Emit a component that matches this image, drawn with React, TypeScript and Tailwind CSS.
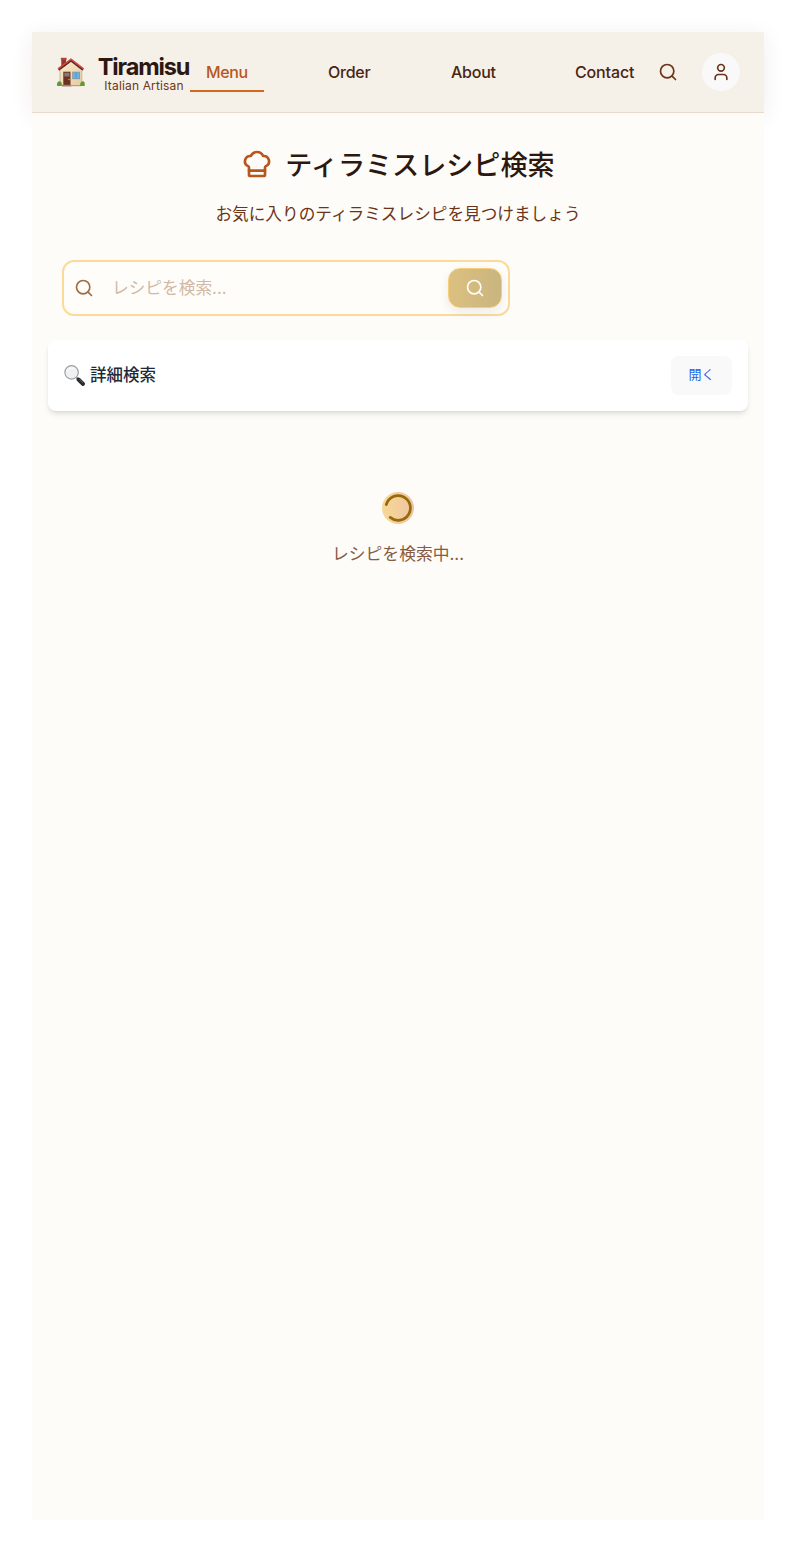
import React from "react";
import { ChefHat, Search, User } from "lucide-react";

function House() {
  return (
    <svg viewBox="0 0 32 32" className="h-8 w-8 shrink-0" aria-label="Home">
      <defs>
        <linearGradient id="wall" x1="0" x2="1" y1="0" y2="1">
          <stop offset="0" stopColor="#faebcd" />
          <stop offset="1" stopColor="#e4cba2" />
        </linearGradient>
      </defs>
      <path d="M6.300 2.500h4.800v8H6.300z" fill="#94372d" />
      <path d="M5.800 1.800h5.800v2H5.800z" fill="#b5443a" />
      <path d="M5 13.500 16 5l10.800 8.500V29.500H5z" fill="url(#wall)" />
      <path d="M5 14.500v15M26.800 14.500v15" stroke="#b9a68a" strokeWidth="0.7" />
      <path d="M3.600 14 16 4.800 28 14" fill="none" stroke="#4e2b25" strokeWidth="1.600" />
      <path d="M3 12.900 16 3.200l12.600 9.700" fill="none" stroke="#d5453d" strokeWidth="1.500" />
      <path d="M8.300 15.700h7.200V29H8.300z" fill="#6b321d" />
      <path d="M9.300 16.700h5.200V20.500H9.300z" fill="#827a78" />
      <circle cx="14" cy="23.500" r="0.7" fill="#e6b655" />
      <path d="M17.200 15.700h7.800v7.500h-7.800z" fill="#8d989d" />
      <path d="M18 16.500h6.200v5.800H18z" fill="#68b2e6" />
      <path d="M21.100 16.500v5.800" stroke="#5187ad" strokeWidth="0.6" />
      <path d="M7 28.800h9.500v1.700H7z" fill="#9a8374" />
      <path d="M16.500 29h9.500v1.200h-9.500z" fill="#b69e7e" />
      <path d="M2.200 30c-.7-2.700.3-4.500 2-4.700 1.800 0 3.100 2 2.600 4.700z" fill="#659638" />
      <path d="M25.200 30c-.5-2.600.7-4.600 2.400-4.700 1.800 0 2.700 2 2 4.700z" fill="#659638" />
    </svg>
  );
}

function Magnifier() {
  return (
    <svg viewBox="0 0 22 22" className="h-[22px] w-[22px] shrink-0" aria-hidden="true">
      <path d="m12.500 12.500 2.500 2.500" stroke="#777e84" strokeWidth="2" />
      <path d="m14.500 14.500 4.600 4.500" stroke="#292c2e" strokeWidth="3.900" strokeLinecap="round" />
      <path d="m15.300 14.300 3.800 3.600" stroke="#777" strokeWidth="0.700" />
      <circle cx="7.600" cy="7.400" r="6.700" fill="#f0f1f2" stroke="#9a9fa4" strokeWidth="1.200" />
      <path d="M3 6.500C4 3.500 7 2.500 9.500 3.300" fill="none" stroke="#fff" strokeWidth="1" />
    </svg>
  );
}

const navItems = ["Menu", "Order", "About", "Contact"];

export default function App() {
  return (
    <div className="h-[1552px] bg-white p-8 font-['Inter','Noto_Sans_CJK_JP',sans-serif]">
      <div className="h-[1488px] bg-[#fefcf8]">
        <header className="flex h-[81px] items-center border-b border-[#e8dacd] bg-[#f5f0e8] pr-6 pl-[23px] shadow-[0_4px_20px_rgba(101,52,28,0.09)]">
          <House />
          <div className="mt-1 ml-[11px] flex w-[92px] shrink-0 flex-col items-center">
            <span className="mr-px text-[23.500px] leading-[24px] font-bold tracking-[-1.100px] whitespace-nowrap text-[#2c1810]">Tiramisu</span>
            <span className="text-xs leading-[14px] tracking-[0.15px] whitespace-nowrap text-[#6f3515]">Italian Artisan</span>
          </div>
          <nav className="flex gap-12">
            {navItems.map((item, index) => (
              <a
                key={item}
                className={
                  index === 0
                    ? "h-10 w-[74px] border-b-2 border-[#d2691e] pl-4 text-base leading-[40px] font-medium tracking-[-0.35px] text-[#b8571b]"
                    : index === 3
                      ? "h-10 w-[91px] pl-[17px] text-base leading-[40px] font-medium tracking-[-0.15px] text-[#4a2511]"
                      : "h-10 w-[75px] pl-4 text-base leading-[40px] font-medium tracking-[-0.25px] text-[#4a2511]"
                }
              >
                {item}
              </a>
            ))}
          </nav>
          <button className="ml-auto flex h-9 w-9 shrink-0 items-center justify-center" aria-label="Search">
            <Search size={20} strokeWidth={2} className="text-[#6b3418]" />
          </button>
          <button className="ml-4 flex h-[38px] w-[38px] shrink-0 items-center justify-center rounded-full bg-[#f9f9f9]" aria-label="Account">
            <User size={20} strokeWidth={2} className="text-[#6b3418]" />
          </button>
        </header>

        <main className="relative h-[1407px] bg-[#fefcf8] px-4 pt-[31px]">
          <div className="flex h-10 items-center justify-center gap-3">
            <ChefHat size={32} strokeWidth={2} className="text-[#b8571b]" />
            <h1 className="pt-[3px] text-[27.100px] leading-10 font-medium whitespace-nowrap text-[#2c1810]">ティラミスレシピ検索</h1>
          </div>
          <p className="mt-[18px] text-center text-[16.650px] leading-6 text-[#6b3418]">お気に入りのティラミスレシピを見つけましょう</p>

          <div className="mt-[34px] ml-[14px] flex h-14 w-[448px] items-center rounded-xl border-2 border-[#fadb98] bg-[#fefdfa] pr-1.5 pl-2.5">
            <Search size={20} className="shrink-0 text-[#a06d45]" />
            <input
              className="ml-[18px] min-w-0 flex-1 bg-transparent pt-px text-[16.700px] text-[#6b3418] outline-none placeholder:text-[#d2b9a5]"
              placeholder="レシピを検索..."
            />
            <button className="flex h-10 w-[54px] items-center justify-center rounded-xl border border-[#f7ce78] bg-linear-to-r from-[#dcc080] to-[#c9b57f] text-[#fffdf5] shadow-[0_4px_12px_rgba(44,24,16,0.08)]" aria-label="Search recipes">
              <Search size={20} />
            </button>
          </div>

          <section className="mt-6 flex h-[71px] items-center rounded-lg bg-white px-4 shadow-[0_4px_6px_-1px_rgba(0,0,0,0.10),0_2px_4px_-2px_rgba(0,0,0,0.10)]">
            <Magnifier />
            <h2 className="ml-1 pb-0.5 text-[16.5px] leading-6 font-medium text-[#1f2937]">詳細検索</h2>
            <button className="ml-auto h-[39px] w-[61px] rounded-lg bg-[#f9f9f9] pb-0.5 text-[13px] text-[#2563eb]">開く</button>
          </section>

          <div className="mt-[81px] flex flex-col items-center">
            <div className="flex h-8 w-8 items-center justify-center rounded-full bg-linear-to-r from-[#f8d894] to-[#edc4a2]">
              <svg viewBox="0 0 32 32" className="h-8 w-8" aria-hidden="true">
                <path d="M4.300 12.500A12.300 12.300 0 1 1 8.200 25.400" fill="none" stroke="#966a0b" strokeWidth="2.700" strokeLinecap="round" />
              </svg>
            </div>
            <p className="mt-[18px] text-[16.800px] leading-6 text-[#855b43]">レシピを検索中...</p>
          </div>
        </main>
      </div>
    </div>
  );
}
